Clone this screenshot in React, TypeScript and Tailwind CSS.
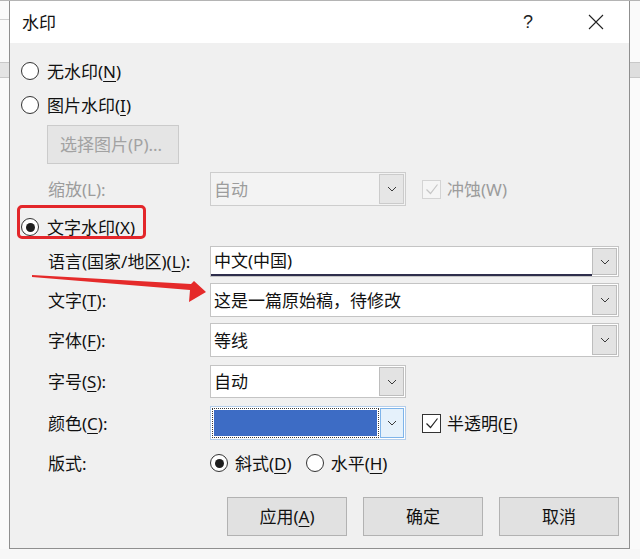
import type { ReactNode } from "react";

const font = "font-['Noto_Sans','Noto_Sans_CJK_SC',sans-serif]";

function Chevron() {
  return (
    <svg width="10" height="6" viewBox="0 0 10 6" fill="none">
      <path d="M1 1l4 4 4-4" stroke="#3a3a3a" strokeWidth="1" />
    </svg>
  );
}

function Radio({ checked = false }: { checked?: boolean }) {
  return (
    <span className="w-[18px] h-[18px] rounded-full border border-[#333] bg-white flex items-center justify-center shrink-0">
      {checked && <span className="w-[9px] h-[9px] rounded-full bg-[#1e1e1e]" />}
    </span>
  );
}

function Check({ disabled = false }: { disabled?: boolean }) {
  return (
    <span
      className={`w-[19px] h-[19px] border flex items-center justify-center shrink-0 ${
        disabled ? "border-[#d4d4d4] bg-[#f5f5f5]" : "border-[#333] bg-white"
      }`}
    >
      <svg width="14" height="12" viewBox="0 0 14 12" fill="none">
        <path d="M1.5 6.5l4 4 7-9" stroke={disabled ? "#c6c6c6" : "#222"} strokeWidth="1.2" />
      </svg>
    </span>
  );
}

function Combo({
  className,
  children,
  disabled = false,
  underline = false,
}: {
  className: string;
  children?: ReactNode;
  disabled?: boolean;
  underline?: boolean;
}) {
  return (
    <div
      className={`flex h-full border ${
        disabled ? "border-[#cdcdcd] bg-[#f3f3f3] text-[#9c9c9c]" : "border-[#c4c4c4] bg-white text-[#111]"
      } ${className}`}
    >
      <div className={`flex-1 flex items-center pl-[3px] ${underline ? "border-b-2 border-[#2e2e4c]" : ""}`}>
        {children}
      </div>
      <div
        className={`w-[25px] my-[1px] mr-[1px] flex items-center justify-center border ${
          disabled ? "border-[#cbcbcb] bg-[#e6e6e6]" : "border-[#bdbdbd] bg-[#e3e3e3]"
        }`}
      >
        <Chevron />
      </div>
    </div>
  );
}

function Label({ children }: { children: ReactNode }) {
  return <div className="w-[162px] shrink-0 flex items-center">{children}</div>;
}

function Key({ children }: { children: ReactNode }) {
  return <u className="underline-offset-[3px] decoration-1">{children}</u>;
}

export default function App() {
  return (
    <div className={`w-[640px] h-[559px] flex flex-col bg-[#f7f7f7] text-[17px] leading-none text-[#111] ${font}`}>
      <div className="flex h-[549px] border-t border-[#b4b4b4]">
        {/* document behind, left */}
        <div className="w-[9px] bg-[#fafafa] flex flex-col">
          <div className="h-[18px]" />
          <div className="h-px bg-[#cfcfcf]" />
          <div className="h-[42px]" />
          <div className="h-[16px] bg-[#e4e4e4] border-y border-[#c8c8c8]" />
        </div>

        {/* dialog */}
        <div className="w-[621px] flex flex-col border-x border-b border-[#8f8f8f] bg-[#f0f0f0] relative">
          <div className="h-[42px] bg-white flex items-center pl-[12px] pr-[25px]">
            <span className="flex-1">水印</span>
            <span className="text-[18px] text-[#222] mr-[55px] font-['Liberation_Sans',sans-serif]">?</span>
            <svg width="16" height="16" viewBox="0 0 16 16" fill="none">
              <path d="M1 1l14 14M15 1L1 15" stroke="#222" strokeWidth="1.1" />
            </svg>
          </div>

          <div className="flex-1 flex flex-col pr-[10px]">
            <div className="h-[20px] mt-[18px] flex items-center gap-[8px] pl-[11px]">
              <Radio />
              <span>
                无水印(<Key>N</Key>)
              </span>
            </div>
            <div className="h-[20px] mt-[14px] flex items-center gap-[8px] pl-[11px]">
              <Radio />
              <span>
                图片水印(<Key>I</Key>)
              </span>
            </div>
            <div className="mt-[10px] pl-[37px]">
              <div className="w-[132px] h-[39px] border border-[#cbcbcb] bg-[#e5e5e5] text-[#a2a2a2] flex items-center pl-[12px]">
                选择图片(P)...
              </div>
            </div>
            <div className="h-[34px] mt-[8px] flex pl-[38px] text-[#9c9c9c]">
              <Label>缩放(L):</Label>
              <Combo className="w-[196px]" disabled>
                自动
              </Combo>
              <div className="flex items-center gap-[6px] ml-[16px]">
                <Check disabled />
                <span>冲蚀(W)</span>
              </div>
            </div>

            <div className="h-[20px] mt-[11px] flex items-center gap-[8px] pl-[11px] relative">
              <Radio checked />
              <span>
                文字水印(<Key>X</Key>)
              </span>
              <div className="absolute left-[7px] top-[-12px] w-[129px] h-[34px] border-[3px] border-[#e3262a] rounded-[5px]" />
            </div>

            <div className="h-[31px] mt-[9px] flex pl-[38px]">
              <Label>
                <span>
                  语言(国家/地区)(<Key>L</Key>):
                </span>
              </Label>
              <Combo className="flex-1" underline>
                中文(中国)
              </Combo>
            </div>
            <div className="h-[34px] mt-[6px] flex pl-[38px]">
              <Label>
                <span>
                  文字(<Key>T</Key>):
                </span>
              </Label>
              <Combo className="flex-1">这是一篇原始稿，待修改</Combo>
            </div>
            <div className="h-[34px] mt-[6px] flex pl-[38px]">
              <Label>
                <span>
                  字体(<Key>F</Key>):
                </span>
              </Label>
              <Combo className="flex-1">等线</Combo>
            </div>
            <div className="h-[33px] mt-[8px] flex pl-[38px]">
              <Label>
                <span>
                  字号(<Key>S</Key>):
                </span>
              </Label>
              <Combo className="w-[196px]">自动</Combo>
            </div>
            <div className="h-[34px] mt-[8px] flex pl-[38px]">
              <Label>
                <span>
                  颜色(<Key>C</Key>):
                </span>
              </Label>
              <div className="flex w-[196px] h-full border border-[#b3cdea] bg-white p-px">
                <div className="flex-1 border border-dotted border-[#3a3a3a] p-px">
                  <div className="h-full bg-[#3d6cc5]" />
                </div>
                <div className="w-[24px] ml-px border border-[#7eb4ea] bg-[#e5f1fb] flex items-center justify-center">
                  <Chevron />
                </div>
              </div>
              <div className="flex items-center gap-[6px] ml-[16px]">
                <Check />
                <span>
                  半透明(<Key>E</Key>)
                </span>
              </div>
            </div>
            <div className="h-[20px] mt-[13px] flex items-center pl-[38px]">
              <Label>版式:</Label>
              <div className="flex items-center gap-[7px]">
                <Radio checked />
                <span>
                  斜式(<Key>D</Key>)
                </span>
              </div>
              <div className="flex items-center gap-[7px] ml-[14px]">
                <Radio />
                <span>
                  水平(<Key>H</Key>)
                </span>
              </div>
            </div>

            <div className="h-[39px] mt-[24px] flex justify-end gap-[16px]">
              <div className="w-[120px] border border-[#b2b2b2] bg-[#e1e1e1] flex items-center justify-center">
                <span>
                  应用(<Key>A</Key>)
                </span>
              </div>
              <div className="w-[120px] border border-[#b2b2b2] bg-[#e1e1e1] flex items-center justify-center">
                确定
              </div>
              <div className="w-[120px] border border-[#b2b2b2] bg-[#e1e1e1] flex items-center justify-center">
                取消
              </div>
            </div>
          </div>
        </div>

        {/* document behind, right */}
        <div className="w-[10px] bg-[#fafafa] flex flex-col">
          <div className="h-[61px]" />
          <div className="h-[16px] bg-[#dedede] border-y border-[#c8c8c8]" />
        </div>
      </div>
      <div className="flex-1 bg-[#f7f7f7]" />

      {/* annotation arrow */}
      <svg className="absolute left-0 top-0 pointer-events-none" width="640" height="559" viewBox="0 0 640 559">
        <polygon points="32,275 191,284 194,281 206,292 189,302 190,290 32,277" fill="#e52a2a" />
      </svg>
    </div>
  );
}
